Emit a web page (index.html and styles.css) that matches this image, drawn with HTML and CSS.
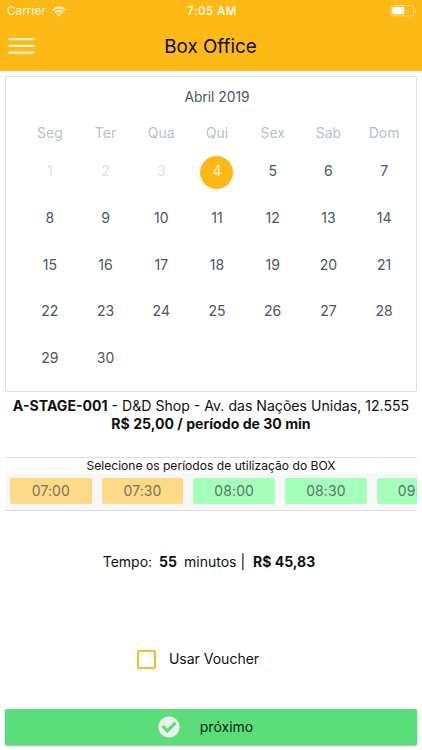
FILE: index.html
```html
<!DOCTYPE html>
<html lang="pt-BR">
<head>
<meta charset="utf-8" />
<meta name="viewport" content="width=device-width, initial-scale=1" />
<title>Box Office</title>
<link rel="stylesheet" href="styles.css">
</head>
<body>

<header class="header">
	<div class="statusBar">
		<div class="carrier">
			<span>Carrier</span>
			<svg width="14" height="11" viewBox="0 0 14 11" fill="none" stroke="#fff8e0" stroke-width="2">
				<path d="M0.8 4.1a8.9 8.9 0 0 1 12.4 0M3.2 6.6a5.5 5.5 0 0 1 7.6 0"/>
				<path d="M7 10.4L4.8 8.2a3.2 3.2 0 0 1 4.4 0z" fill="#fff8e0" stroke="none"/>
			</svg>
		</div>
		<div class="clock">7:05 AM</div>
		<div class="battery">
			<svg width="27" height="12" viewBox="0 0 27 12">
				<rect x="0.9" y="0.6" width="22.8" height="10.2" rx="2.4" fill="none" stroke="#fed983"/>
				<rect x="2.2" y="2" width="12" height="7.2" rx="0.8" fill="#fff"/>
				<path d="M25 4v3.6c1.6-.6 1.6-3 0-3.6z" fill="#fed983"/>
			</svg>
		</div>
	</div>
	<div class="navBar">
		<button class="menu" aria-label="Menu">
			<svg width="27" height="18" viewBox="0 0 27 18" stroke="#fff4cf" stroke-width="2.3" stroke-linecap="round">
				<path d="M1.3 2.2h24.4M1.3 8.9h24.4M1.3 15.6h24.4"/>
			</svg>
		</button>
		<h1>Box Office</h1>
	</div>
</header>

<main class="page">
	<section class="calendar">
		<div class="month">Abril 2019</div>
		<div class="week weekdays">
			<span>Seg</span><span>Ter</span><span>Qua</span><span>Qui</span><span>Sex</span><span>Sab</span><span>Dom</span>
		</div>
		<div class="week days">
			<span class="past">1</span><span class="past">2</span><span class="past">3</span><span class="selected"><b>4</b></span><span>5</span><span>6</span><span>7</span>
			<span>8</span><span>9</span><span>10</span><span>11</span><span>12</span><span>13</span><span>14</span>
			<span>15</span><span>16</span><span>17</span><span>18</span><span>19</span><span>20</span><span>21</span>
			<span>22</span><span>23</span><span>24</span><span>25</span><span>26</span><span>27</span><span>28</span>
			<span>29</span><span>30</span>
		</div>
	</section>

	<section class="place">
		<div class="address"><b>A-STAGE-001</b> - D&amp;D Shop - Av. das Nações Unidas, 12.555</div>
		<div class="price">R$ 25,00 / período de 30 min</div>
	</section>

	<section class="periods">
		<div class="periodsTitle">Selecione os períodos de utilização do BOX</div>
		<div class="slots">
			<div class="slot busy">07:00</div>
			<div class="slot busy">07:30</div>
			<div class="slot">08:00</div>
			<div class="slot">08:30</div>
			<div class="slot">09:00</div>
		</div>
	</section>

	<section class="total">
		<span>Tempo:</span><b class="minutes">55</b><span>minutos |</span><b class="amount">R$ 45,83</b>
	</section>

	<label class="voucher">
		<input type="checkbox" />
		<span>Usar Voucher</span>
	</label>

	<button class="next">
		<svg width="22" height="22" viewBox="0 0 22 22">
			<circle cx="11" cy="11" r="10.6" fill="#eeeeee"/>
			<path d="M5.4 10.9l4 4 7.2-7.2" fill="none" stroke="#5cdd7b" stroke-width="3.2" stroke-linecap="round"/>
		</svg>
		<span>próximo</span>
	</button>
</main>

</body>
</html>
```
FILE: styles.css
```css
* {
	box-sizing: border-box;
}

html, body {
	margin: 0;
	padding: 0;
	height: 100%;
}

body {
	display: flex;
	flex-direction: column;
	overflow: hidden;
	background-color: #fff;
	color: #111;
	font-family: Inter, "Liberation Sans", sans-serif;
	font-size: 14px;
}

button {
	border: 0;
	font-family: inherit;
	cursor: pointer;
}

.header {
	height: 71px;
	background-color: #fdb915;
}

.statusBar {
	display: grid;
	grid-template-columns: 1fr auto 1fr;
	height: 22px;
	padding: 0 5px 0 7px;
	align-items: center;
	color: #fff8e0;
	font-size: 11.5px;
}

.carrier {
	display: flex;
	align-items: center;
	gap: 6px;
}

.carrier span {
	letter-spacing: 0.15px;
}

.clock {
	font-weight: 600;
	letter-spacing: 0.4px;
}

.battery {
	display: flex;
	justify-content: flex-end;
}

.navBar {
	display: grid;
	grid-template-columns: 1fr auto 1fr;
	height: 47px;
	padding: 0 9px 0 8px;
	align-items: center;
}

.navBar h1 {
	margin: 2px 0 0;
	font-size: 18.8px;
	font-weight: 400;
	color: #0c0a04;
}

.menu {
	display: flex;
	width: 27px;
	padding: 0;
	background: none;
}

.page {
	flex: 1;
	display: flex;
	flex-direction: column;
	padding: 5px 5px 5px;
}

.calendar {
	height: 316px;
	padding: 12px 4px 0 15px;
	border: 1.5px solid #dfdfdf;
	border-radius: 2px;
	color: #4a5661;
}

.month {
	margin-left: 1px;
	line-height: 16px;
	text-align: center;
	font-size: 13.8px;
}

.week {
	display: grid;
	grid-template-columns: repeat(7, 1fr);
	margin-left: 1px;
	text-align: center;
}

.weekdays {
	margin-top: 19px;
	line-height: 17px;
	color: #b6c1cd;
}

.days {
	margin-top: 13px;
	grid-auto-rows: 46.8px;
	line-height: 34px;
}

.days .past {
	color: #dde3e9;
}

.selected b {
	display: block;
	width: 33px;
	height: 33px;
	margin: 2px auto 0;
	border-radius: 50%;
	background-color: #fdb915;
	color: #fff6d8;
	font-weight: 400;
	line-height: 30px;
}

.place {
	margin-top: 5px;
	text-align: center;
	line-height: 17.5px;
	white-space: nowrap;
	font-size: 14.1px;
}

.price {
	font-weight: 700;
}

.periods {
	margin-top: 25px;
	border-top: 1.5px solid #dedede;
	border-bottom: 1.5px solid #dedede;
}

.periodsTitle {
	height: 15px;
	line-height: 16px;
	text-align: center;
	font-size: 12.1px;
}

.slots {
	display: flex;
	gap: 10px;
	height: 37px;
	padding: 5px 0 6px 5px;
	overflow: hidden;
	background-color: #f8f8f8;
}

.slot {
	flex: 0 0 81.7px;
	border-radius: 2px;
	background-color: #a4ffbb;
	color: #5d7563;
	line-height: 25px;
	text-align: center;
	letter-spacing: 0.1px;
}

.slot.busy {
	background-color: #fed986;
	color: #7e7257;
}

.total {
	display: flex;
	justify-content: center;
	margin-top: 42px;
	margin-right: 4px;
	line-height: 17px;
}

.total .minutes {
	margin: 0 7px;
}

.total .amount {
	margin-left: 8px;
}

.voucher {
	display: flex;
	align-items: center;
	justify-content: center;
	gap: 13px;
	margin-top: 79px;
	margin-right: 26px;
	line-height: 20px;
}

.voucher input {
	appearance: none;
	width: 19px;
	height: 19px;
	margin: 0;
	border: 2px solid #fdb92d;
	border-radius: 2px;
}

.next {
	display: flex;
	align-items: center;
	justify-content: center;
	gap: 20px;
	height: 36px;
	margin-top: auto;
	padding: 0 11px 0 0;
	border-radius: 2px;
	background-color: #5cdd7b;
	box-shadow: 0 1px 2px rgba(0, 0, 0, 0.35);
	color: #0d2413;
	font-size: 14px;
}

.next span {
	padding-bottom: 2px;
}
```
